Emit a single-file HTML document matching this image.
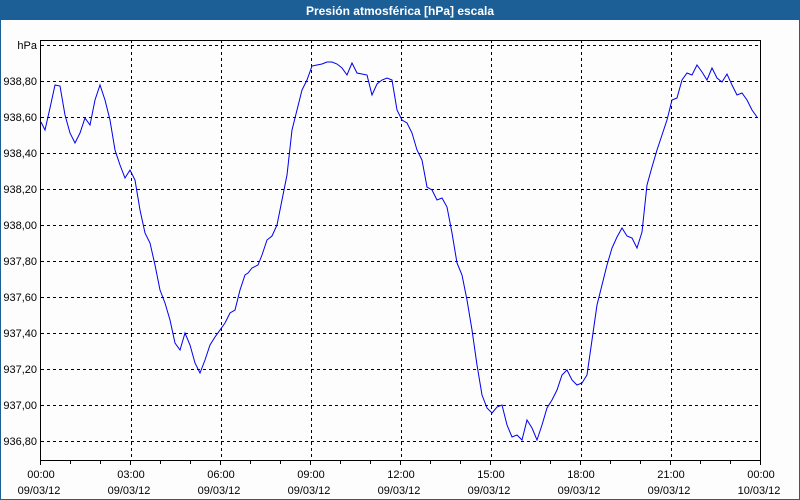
<!DOCTYPE html>
<html><head><style>
html,body{margin:0;padding:0;width:800px;height:500px;overflow:hidden;background:#fff}
svg{display:block}
text{font-family:"Liberation Sans",sans-serif;font-size:11px;fill:#000}
</style></head><body>
<svg width="800" height="500" viewBox="0 0 800 500" xmlns="http://www.w3.org/2000/svg">
<rect x="0" y="0" width="800" height="500" fill="#1c5e96"/>
<rect x="1" y="20" width="798" height="479" fill="#fdfdfd"/>
<text x="400" y="15" text-anchor="middle" style="font-weight:bold;font-size:12px;fill:#fff">Presión atmosférica [hPa] escala</text>
<g stroke="#000" stroke-width="1" stroke-dasharray="3,3" fill="none">
<path d="M41 45.5H760M41 81.5H760M41 117.5H760M41 153.5H760M41 189.5H760M41 225.5H760M41 261.5H760M41 297.5H760M41 333.5H760M41 369.5H760M41 405.5H760M41 441.5H760"/>
<path d="M131.5 40V461M221.5 40V461M311.5 40V461M401.5 40V461M491.5 40V461M581.5 40V461M671.5 40V461"/>
</g>
<rect x="40.5" y="40.5" width="720" height="420" fill="none" stroke="#000"/>
<g stroke="#000">
<path d="M40.5 461V465M70.5 461V464M100.5 461V464M130.5 461V465M160.5 461V464M190.5 461V464M220.5 461V465M250.5 461V464M280.5 461V464M310.5 461V465M340.5 461V464M370.5 461V464M400.5 461V465M430.5 461V464M460.5 461V464M490.5 461V465M520.5 461V464M550.5 461V464M580.5 461V465M610.5 461V464M640.5 461V464M670.5 461V465M700.5 461V464M730.5 461V464M760.5 461V465"/>
</g>
<polyline fill="none" stroke="#0000ee" stroke-width="1" points="41,122 45,130 50,108 55,85 60,86 65,115 70,133 75,143 80,133 85,118 90,125 95,100 100,85 105,100 110,120 115,150 120,165 125,178 130,170 135,180 140,210 145,233 150,243 155,265 160,290 165,303 170,320 175,343 180,350 185,333 190,345 195,363 200,373 205,360 210,345 215,337 220,330 225,323 230,313 235,310 240,290 245,275 248,273 252,268 258,265 262,255 267,240 272,236 277,225 282,200 287,175 292,130 297,110 302,90 307,80 312,66 317,65 322,64 327,62 332,62 337,64 342,68 347,75 352,63 357,73 362,74 367,75 372,95 377,84 382,80 387,78 392,80 397,110 402,120 407,123 412,133 417,150 422,160 427,187 432,190 437,200 442,198 447,207 452,233 457,263 462,275 467,300 472,330 477,365 482,395 487,408 492,413 497,407 502,405 507,425 512,437 517,435 522,440 527,420 532,428 537,440 542,425 547,408 552,400 557,390 562,375 567,370 572,380 577,385 582,383 587,375 592,340 597,305 602,285 607,265 612,248 617,237 622,228 627,236 632,238 637,248 642,232 647,185 652,167 657,150 662,135 667,120 672,100 677,98 682,80 687,73 692,75 697,65 702,72 707,80 712,68 717,78 722,82 727,74 732,85 737,95 742,93 747,100 752,110 757,117"/>
<g text-anchor="end">
<text x="37" y="49">hPa</text>
<text x="37" y="85">938,80</text>
<text x="37" y="121">938,60</text>
<text x="37" y="157">938,40</text>
<text x="37" y="193">938,20</text>
<text x="37" y="229">938,00</text>
<text x="37" y="265">937,80</text>
<text x="37" y="301">937,60</text>
<text x="37" y="337">937,40</text>
<text x="37" y="373">937,20</text>
<text x="37" y="409">937,00</text>
<text x="37" y="445">936,80</text>
</g>
<g text-anchor="middle">
<text x="41" y="478">00:00</text><text x="39" y="494">09/03/12</text>
<text x="131" y="478">03:00</text><text x="129" y="494">09/03/12</text>
<text x="221" y="478">06:00</text><text x="219" y="494">09/03/12</text>
<text x="311" y="478">09:00</text><text x="309" y="494">09/03/12</text>
<text x="401" y="478">12:00</text><text x="399" y="494">09/03/12</text>
<text x="491" y="478">15:00</text><text x="489" y="494">09/03/12</text>
<text x="581" y="478">18:00</text><text x="579" y="494">09/03/12</text>
<text x="671" y="478">21:00</text><text x="669" y="494">09/03/12</text>
<text x="761" y="478">00:00</text><text x="759" y="494">10/03/12</text>
</g>
</svg>
</body></html>
